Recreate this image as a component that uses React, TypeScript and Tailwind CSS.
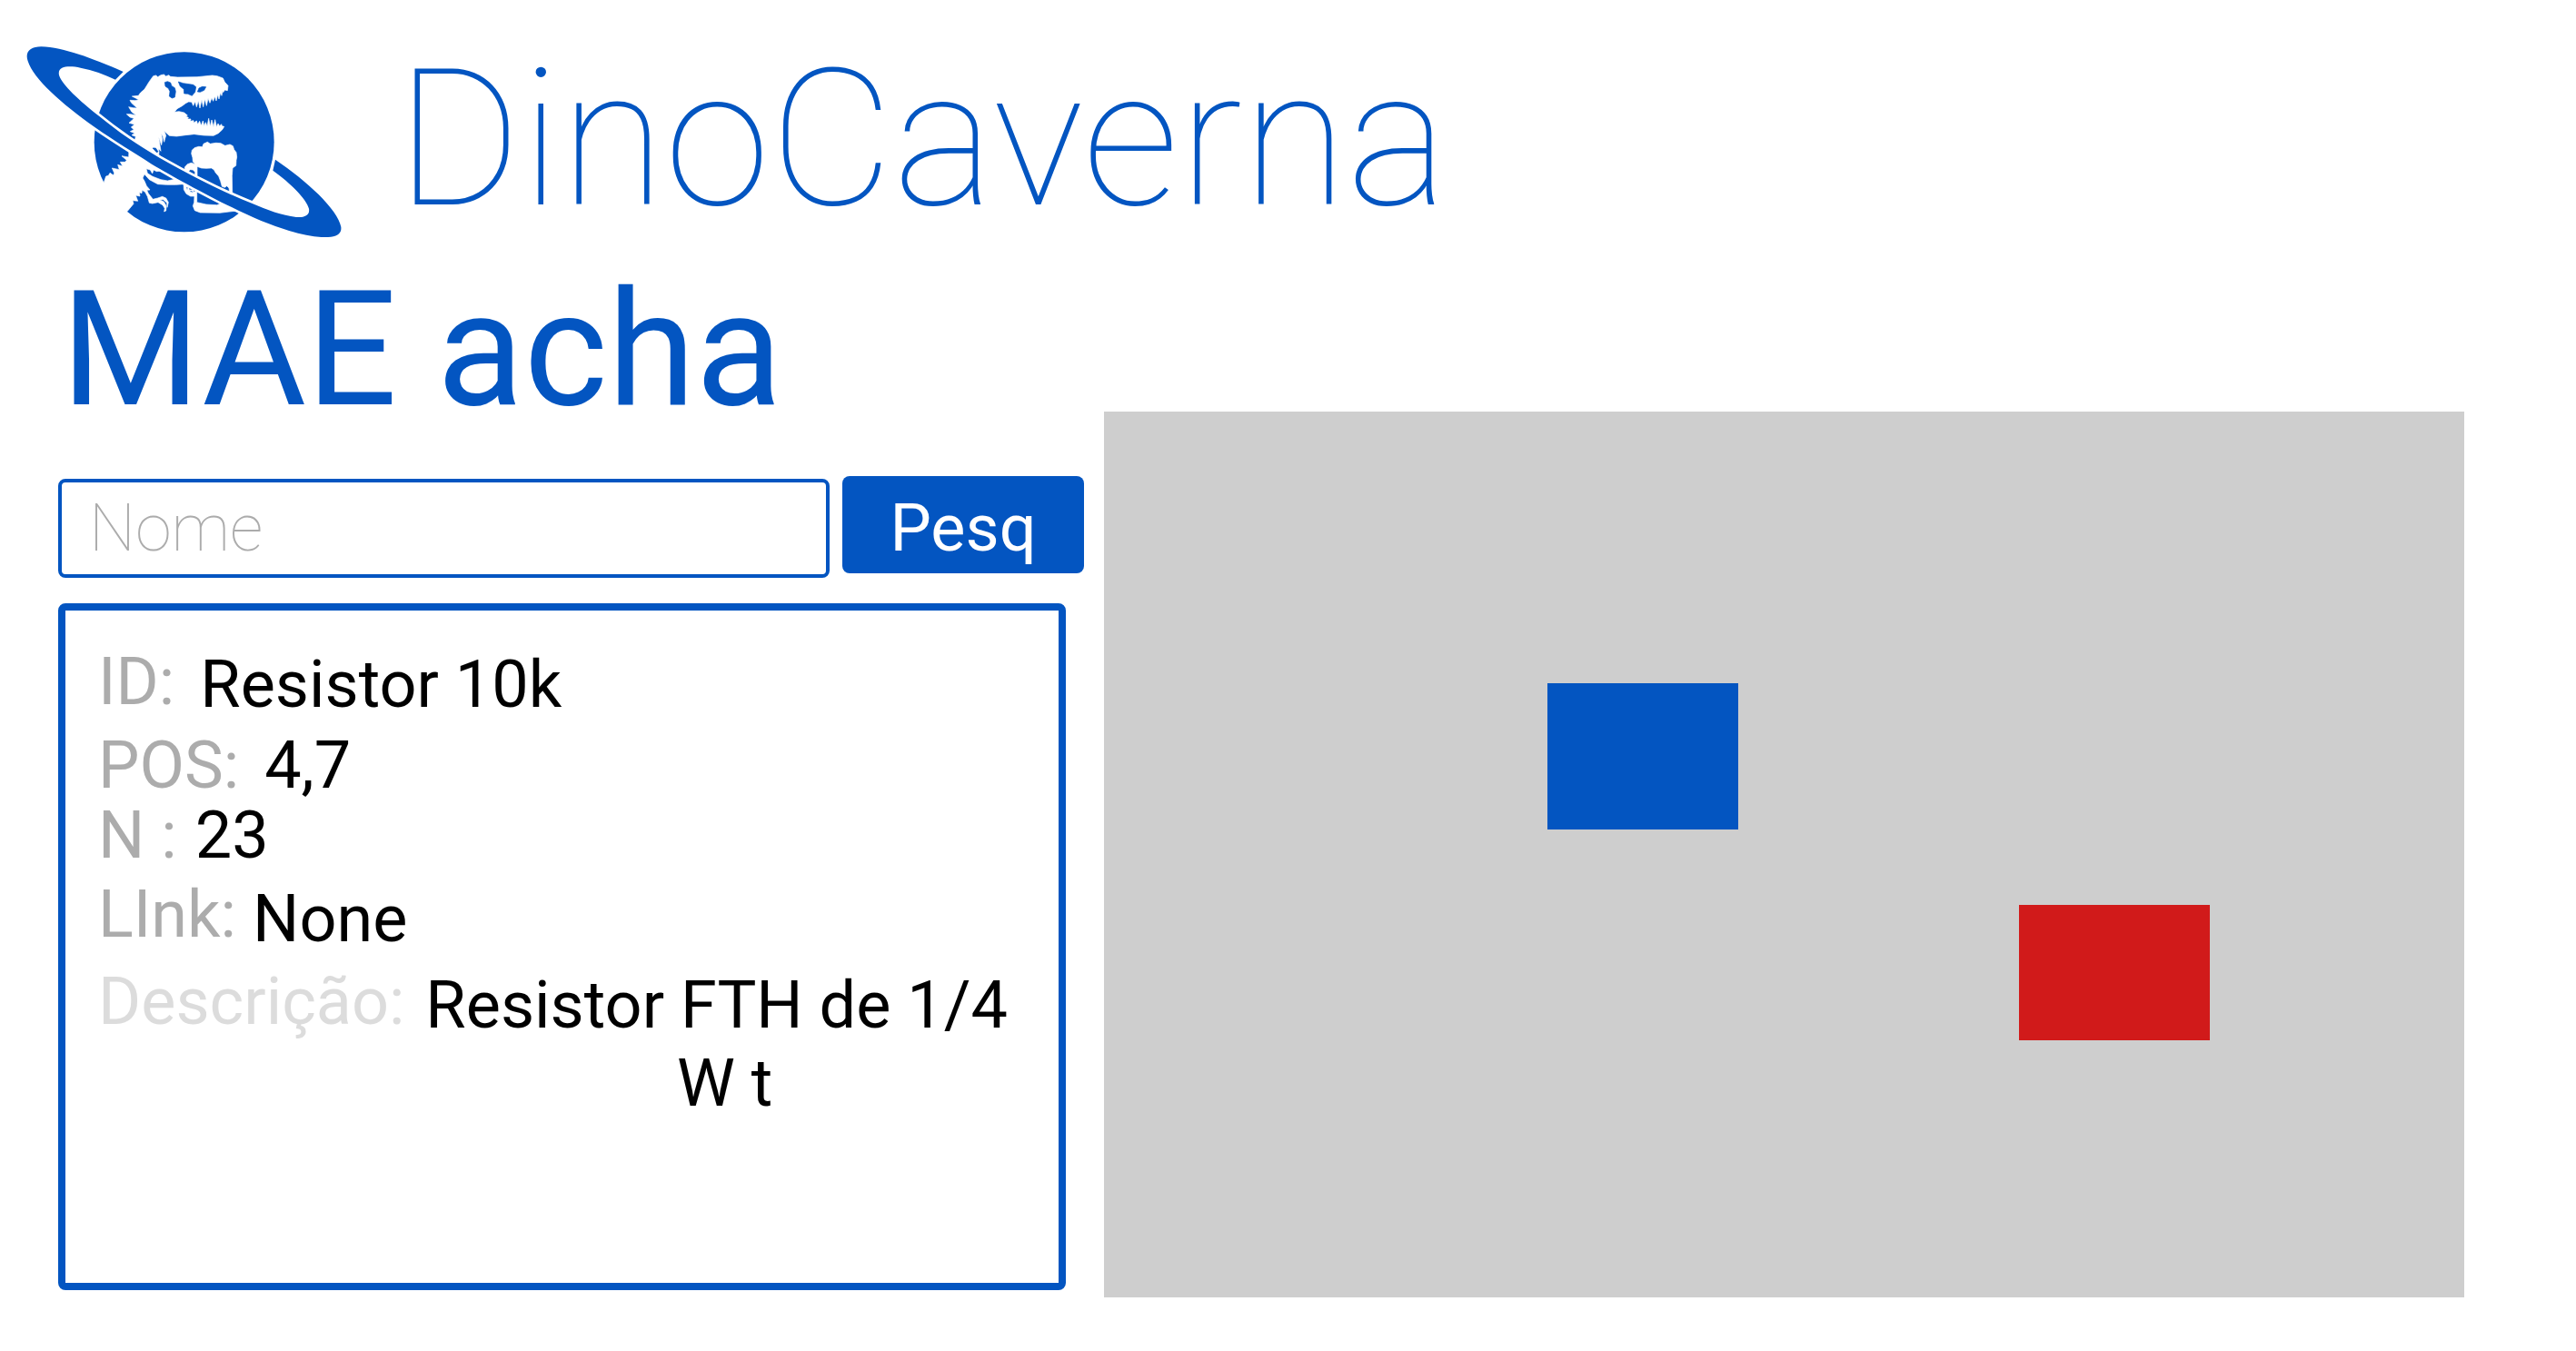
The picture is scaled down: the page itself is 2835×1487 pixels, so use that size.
import React from "react";

function Logo() {
  return (
    <svg viewBox="80 50 1056 650" className="h-auto w-[352px] shrink-0" role="img" aria-label="DinoCaverna logo">
      <circle cx="607" cy="378" r="297" fill="#0355c1" />
      <g fill="#fff" stroke="#fff" strokeWidth="2" strokeLinejoin="round">
        {/* head, neck and back spikes */}
        <path d="M505 160 L514 158 520 163 530 157 540 155 547 161 556 157 562 162 585 164 650 163 700 158 716 160 735 167 741 180 752 192 750 208 741 206 736 214 734 208 731 225 727 215 722 236 718 221 713 242 708 227 703 243 698 232 692 249 686 234 681 258 675 236 670 262 665 238 659 266 654 241 648 262 643 244 637 258 632 246 622 245 612 250 600 259 584 268 575 279 590 277 607 281 618 290 613 294 621 297 618 302 629 302 627 309 638 307 639 315 648 308 652 320 658 309 663 324 669 308 673 325 678 313 683 326 688 300 693 327 698 305 704 328 709 304 714 328 719 317 724 325 730 319 732 325 739 327 733 337 720 349 704 357 672 356 640 352 612 355 582 359 558 357 541 342 547 357 544 366 541 378 537 360 532 351 535 372 532 388 528 376 523 362 527 388 530 408 523 400 521 386 524 412 520 440 440 390 447 360 434 355 444 349 429 343 441 337 432 329 443 320 425 315 434 307 441 300 428 296 417 286 430 286 449 290 434 279 424 262 438 265 452 266 433 249 428 240 446 241 457 238 435 227 456 225 463 215 476 204 492 178Z" />
        {/* body and tail, open to the page on the left */}
        <path d="M425 400 L424 428 401 424 417 438 412 444 396 444 404 458 388 453 393 469 369 464 376 480 374 488 362 480 357 489 349 491 342 511 325 560 400 620 419 607 440 582 437 571 454 573 447 554 461 557 459 544 467 547 468 537 478 543 486 558 492 579 502 581 521 577 536 586 543 597 541 608 547 605 548 589 540 575 526 569 538 568 550 579 551 594 555 577 547 563 535 558 520 563 504 567 489 548 484 537 494 536 483 523 476 507 470 497 476 484 492 502 520 517 550 519 580 519 605 517 607 502 580 500 552 506 530 502 503 492 486 481 482 466 495 470 502 482 506 470 516 475 526 474 500 456 455 425Z" />
        {/* mug: foam, sides, handle, base */}
        <path d="M635 430 L631 416 633 405 641 397 655 393 667 394 671 384 684 378 693 384 712 381 728 382 742 390 758 386 768 391 772 403 779 412 781 428 779 438 778 456 767 464 765 490 766 545 757 545 755 530 748 523 741 528 732 525 727 507 721 491 710 478 706 470 697 464 680 465 664 464 650 459 650 489 643 489 643 477 636 470 626 469 620 478 610 471 609 461 618 451 630 447 644 451 636 443Z" />
        <path fillRule="evenodd" d="M605 512 L606 535 614 549 628 557 641 557 640 577 636 589 642 604 660 611 725 612 790 604 735 578 715 586 680 584 649 577 649 540 640 542 624 537 622 524ZM613 526 620 528 617 537ZM626 536 638 536 636 545 627 543Z" />
      </g>
      <g fill="#0355c1" stroke="#0355c1" strokeWidth="2" strokeLinejoin="round">
        <path d="M543 181 L552 178 562 182 566 193 576 199 579 211 576 230 567 233 558 227 560 211 555 201 545 194Z" />
        <path d="M588 179 L604 184 637 189 646 196 643 213 633 225 619 219 607 218 606 204 594 194Z" />
        <path d="M651 212 L656 200 667 195 679 196 673 207 660 213Z" />
        <path d="M503 398 L513 398 521 410 516 412Z" />
      </g>
      {/* orbit ring with its white outline */}
      <path
        d="M406 146 C300 100 210 66 135 63 C100 63 80 80 91 111 C110 170 200 250 313 330 C380 377 440 412 500 451 C570 492 680 553 788 605 C890 654 990 688 1060 692 C1105 694 1128 685 1125 658 C1115 600 1010 505 908 436 L900 472 C960 515 1010 565 1019 598 C1023 622 1003 628 977 626 C930 620 880 602 832 581 C740 545 640 495 527 431 C450 385 390 345 327 293 C260 240 205 190 194 157 C187 125 230 126 265 133 C305 141 345 155 380 172 Z"
        fill="#0355c1"
        stroke="#fff"
        strokeWidth="16"
        paintOrder="stroke"
      />
    </svg>
  );
}

type FieldProps = {
  label: string;
  value: string;
  row?: string;
  labelClass?: string;
  valueClass?: string;
};

function Field({ label, value, row = "", labelClass = "text-[#acacac]", valueClass = "self-end leading-[77px]" }: FieldProps) {
  return (
    <div className={`flex ${row}`}>
      <dt className={`shrink-0 leading-[77px] ${labelClass}`}>{label}</dt>
      <dd className={`text-center text-black ${valueClass}`}>{value}</dd>
    </div>
  );
}

export default function App() {
  return (
    <div className="min-h-screen bg-white pb-[59px] font-['Roboto',sans-serif] text-[72px] text-[#0355c1]">
      <header className="flex items-start pt-[47px] pl-[27px]">
        <Logo />
        <span className="ml-[57px] text-[210px] leading-[213px] font-thin">DinoCaverna</span>
      </header>
      <h1 className="mt-[53px] pl-[67px] text-[176px] leading-[136px]">MAE acha</h1>

      <main className="grid grid-cols-[minmax(0,1129fr)_minmax(0,1497fr)] gap-[22px] pr-[123px] pl-16">
        <section className="flex flex-col pt-[71px]">
          <form className="flex items-end gap-[14px]" onSubmit={(e) => e.preventDefault()}>
            <input
              type="text"
              aria-label="Nome"
              placeholder="Nome"
              className="h-[109px] min-w-0 flex-1 rounded-lg border-4 border-[#0355c1] px-[30px] font-thin text-black outline-none placeholder:text-[#acacac]"
            />
            <button type="submit" className="mb-[5px] h-[107px] w-[266px] self-start rounded-lg bg-[#0355c1] pt-1 text-white">
              Pesq
            </button>
          </form>

          <dl className="mt-7 mr-5 min-h-[756px] rounded-lg border-8 border-[#0355c1] pt-10 pl-9">
            <Field label="ID:" value="Resistor 10k" row="mb-3 min-h-20 gap-7" />
            <Field label="POS:" value="4,7" row="gap-7" />
            <Field label="N :" value="23" row="mb-2.5 gap-5" />
            <Field label="LInk:" value="None" row="mb-3.5 min-h-[82px] gap-[18px]" />
            <Field
              label="Descrição:"
              value="Resistor FTH de 1/4 W t"
              row="gap-5"
              labelClass="text-[#dcdcdc]"
              valueClass="max-w-[664px] leading-[86px] whitespace-break-spaces"
            />
          </dl>
        </section>

        <section aria-label="Mapa" className="relative aspect-[1497/975] self-start bg-[#cecece]">
          <div className="absolute top-[30.7%] left-[32.6%] h-[16.5%] w-[14%] bg-[#0355c1]" />
          <div className="absolute top-[55.7%] left-[67.3%] h-[15.3%] w-[14%] bg-[#d11a1a]" />
        </section>
      </main>
    </div>
  );
}
